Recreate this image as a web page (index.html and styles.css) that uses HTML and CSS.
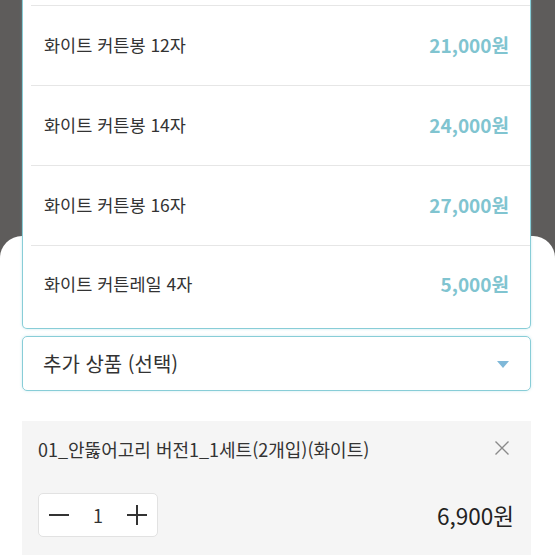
FILE: index.html
```html
<!DOCTYPE html>
<html lang="ko">
<head>
  <meta charset="UTF-8">
  <meta name="viewport" content="width=device-width, initial-scale=1.0">
  <title>옵션 선택</title>
  <link rel="stylesheet" href="styles.css">
</head>
<body>
  <div class="sheet">
    <div class="select-wrap">
      <ul class="option-list">
        <li class="option"></li>
        <li class="option"><span>화이트 커튼봉 12자</span><span class="price">21,000원</span></li>
        <li class="option"><span>화이트 커튼봉 14자</span><span class="price">24,000원</span></li>
        <li class="option"><span>화이트 커튼봉 16자</span><span class="price">27,000원</span></li>
        <li class="option last"><span>화이트 커튼레일 4자</span><span class="price">5,000원</span></li>
      </ul>
      <div class="select">
        <span>추가 상품 (선택)</span>
        <svg class="caret" width="12" height="7" viewBox="0 0 12 7"><path d="M0 0h12L6 7z" fill="#7fb8d8"/></svg>
      </div>
    </div>

    <div class="picked">
      <div class="picked-top">
        <span class="picked-name">01_안뚫어고리 버전1_1세트(2개입)(화이트)</span>
        <svg class="close" width="16" height="16" viewBox="0 0 16 16"><path d="M1.5 1.5l13 13M14.5 1.5l-13 13" stroke="#8a8a8a" stroke-width="1.4"/></svg>
      </div>
      <div class="picked-bottom">
        <div class="stepper">
          <svg width="20" height="20" viewBox="0 0 20 20"><path d="M0 10h20" stroke="#333" stroke-width="2"/></svg>
          <span class="qty">1</span>
          <svg width="20" height="20" viewBox="0 0 20 20"><path d="M0 10h20M10 0v20" stroke="#333" stroke-width="2"/></svg>
        </div>
        <span class="total">6,900원</span>
      </div>
    </div>
  </div>
</body>
</html>
```

FILE: styles.css
```css
html, body { height: 555px; overflow: hidden; }
body { margin: 0; background: #5e5c5b; font-family: "Noto Sans CJK KR", "Noto Sans", sans-serif; color: #333; }
ul { margin: 0; padding: 0; list-style: none; }

.sheet { margin-top: 236px; background: #fff; border-radius: 22px 22px 0 0; padding: 100px 24px 0 22px; height: 319px; box-sizing: border-box; }

.select-wrap { position: relative; }
.option-list { position: absolute; left: 0; right: 0; bottom: calc(100% + 7px); background: #fff; border: 1.5px solid #88cdd7; border-top: none; border-radius: 0 0 5px 5px; box-shadow: 0 0 3px rgba(120, 200, 215, 0.4); }
.option { height: 79px; border-top: 1px solid #e6e6e6; margin-left: 8px; padding: 0 21px 2px 13px; box-sizing: border-box; height: 80px; display: flex; align-items: center; justify-content: space-between; font-size: 17.5px; }
.option.last { height: 83px; padding-bottom: 7px; }
.price { color: #80c4d0; font-weight: 600; font-size: 19px; }

.select { height: 53px; border: 1.5px solid #88cdd7; border-radius: 5px; display: flex; align-items: center; justify-content: space-between; padding: 0 21px 0 20px; font-size: 20px; color: #333; box-shadow: 0 0 3px rgba(120, 200, 215, 0.35); }
.caret { margin-top: 2px; }

.picked { margin-top: 30px; background: #f5f5f5; padding: 16px 16px 30px 16px; }
.picked-top { display: flex; justify-content: space-between; align-items: flex-start; }
.picked-name { font-size: 18px; line-height: 24px; color: #333; }
.close { margin-top: 3px; margin-right: 5px; }
.picked-bottom { display: flex; justify-content: space-between; align-items: center; margin-top: 32px; }
.stepper { width: 98px; height: 42px; background: #fff; border: 1px solid #e2e2e2; border-radius: 5px; display: flex; align-items: center; justify-content: space-between; padding: 0 10px; }
.qty { font-size: 18px; color: #333; }
.total { font-size: 22.5px; color: #222; margin-right: 1px; }
```
